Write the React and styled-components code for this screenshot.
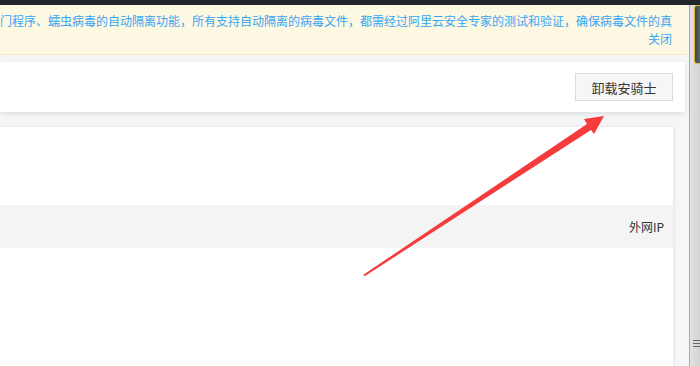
import React from "react";
import styled, { createGlobalStyle } from "styled-components";

const Global = createGlobalStyle`
  html, body { margin: 0; padding: 0; height: 100%; overflow: hidden; }
  body { font-family: "Noto Sans CJK SC", "Noto Sans", sans-serif; font-size: 12px; color: #333; }
  #root { height: 100%; }
`;

const Page = styled.div`
  position: relative;
  width: 700px;
  height: 366px;
  display: flex;
  flex-direction: column;
  overflow: hidden;
`;

const TopBar = styled.div`
  height: 5px;
  flex: none;
  background: #22262a;
`;

const Body = styled.div`
  flex: 1;
  display: flex;
  min-height: 0;
`;

const Main = styled.div`
  width: 689px;
  flex: none;
  background: #f5f6f8;
  display: flex;
  flex-direction: column;
  border-right: 1px solid #a9a9a9;
`;

const Notice = styled.div`
  margin-right: 2px;
  background: #fdf8e2;
  border-bottom: 1px solid #f6ebc6;
  padding: 7px 15px 6px 0;
  color: #36a5f4;
  font-size: 12px;
  line-height: 18px;
  display: flex;
  flex-direction: column;
  overflow: hidden;
`;

const NoticeLine = styled.div`
  display: flex;
  justify-content: flex-end;
  white-space: nowrap;
`;

const CloseLink = styled.span`
  cursor: pointer;
`;

const Header = styled.div`
  margin-top: 7px;
  margin-right: 4px;
  height: 50px;
  background: #fff;
  box-shadow: 0 2px 5px rgba(0, 0, 0, 0.1);
  display: flex;
  align-items: center;
  justify-content: flex-end;
  padding-right: 12px;
  box-sizing: border-box;
  position: relative;
  z-index: 1;
`;

const Button = styled.button`
  width: 98px;
  height: 28px;
  border: 1px solid #dcdcdc;
  background: #f6f6f6;
  color: #333;
  font-family: inherit;
  font-size: 13px;
  padding: 0;
  cursor: pointer;
`;

const Card = styled.div`
  margin-top: 15px;
  margin-right: 16px;
  flex: 1;
  background: #fff;
  box-shadow: 1px 0 4px rgba(0, 0, 0, 0.08);
  padding-top: 78px;
`;

const TableHead = styled.div`
  height: 43px;
  background: #f4f4f4;
  display: flex;
  align-items: center;
  justify-content: flex-end;
  padding-right: 9px;
  font-size: 12px;
  color: #333;
`;

const Scrollbar = styled.div`
  flex: 1;
  position: relative;
  background: linear-gradient(to right, #e2e2e2, #d2d2d2);
`;

const Thumb = styled.div`
  position: absolute;
  top: 0;
  left: 4px;
  right: -3px;
  height: 57px;
  border: 1.5px solid #e4b32c;
  border-radius: 3px;
  background: linear-gradient(to right, #3d4548, #58797d);
`;

const Grip = styled.div`
  position: absolute;
  top: 335px;
  left: 3px;
  right: 0;
  height: 7px;
  background: repeating-linear-gradient(to bottom, #666 0 1px, transparent 1px 3px);
`;

const Arrow = styled.svg`
  position: absolute;
  left: 0;
  top: 0;
  pointer-events: none;
`;

export default function App() {
  return (
    <>
      <Global />
      <Page>
        <TopBar />
        <Body>
          <Main>
            <Notice>
              <NoticeLine>
                门程序、蠕虫病毒的自动隔离功能，所有支持自动隔离的病毒文件，都需经过阿里云安全专家的测试和验证，确保病毒文件的真
              </NoticeLine>
              <NoticeLine>
                <CloseLink>关闭</CloseLink>
              </NoticeLine>
            </Notice>
            <Header>
              <Button>卸载安骑士</Button>
            </Header>
            <Card>
              <TableHead>外网IP</TableHead>
            </Card>
          </Main>
          <Scrollbar>
            <Thumb />
            <Grip />
          </Scrollbar>
        </Body>
        <Arrow width="700" height="366" viewBox="0 0 700 366">
          <polygon
            points="363,275 587,124 584,119 604,116 594,134 591,130 365,276"
            fill="#f53b3b"
          />
        </Arrow>
      </Page>
    </>
  );
}
